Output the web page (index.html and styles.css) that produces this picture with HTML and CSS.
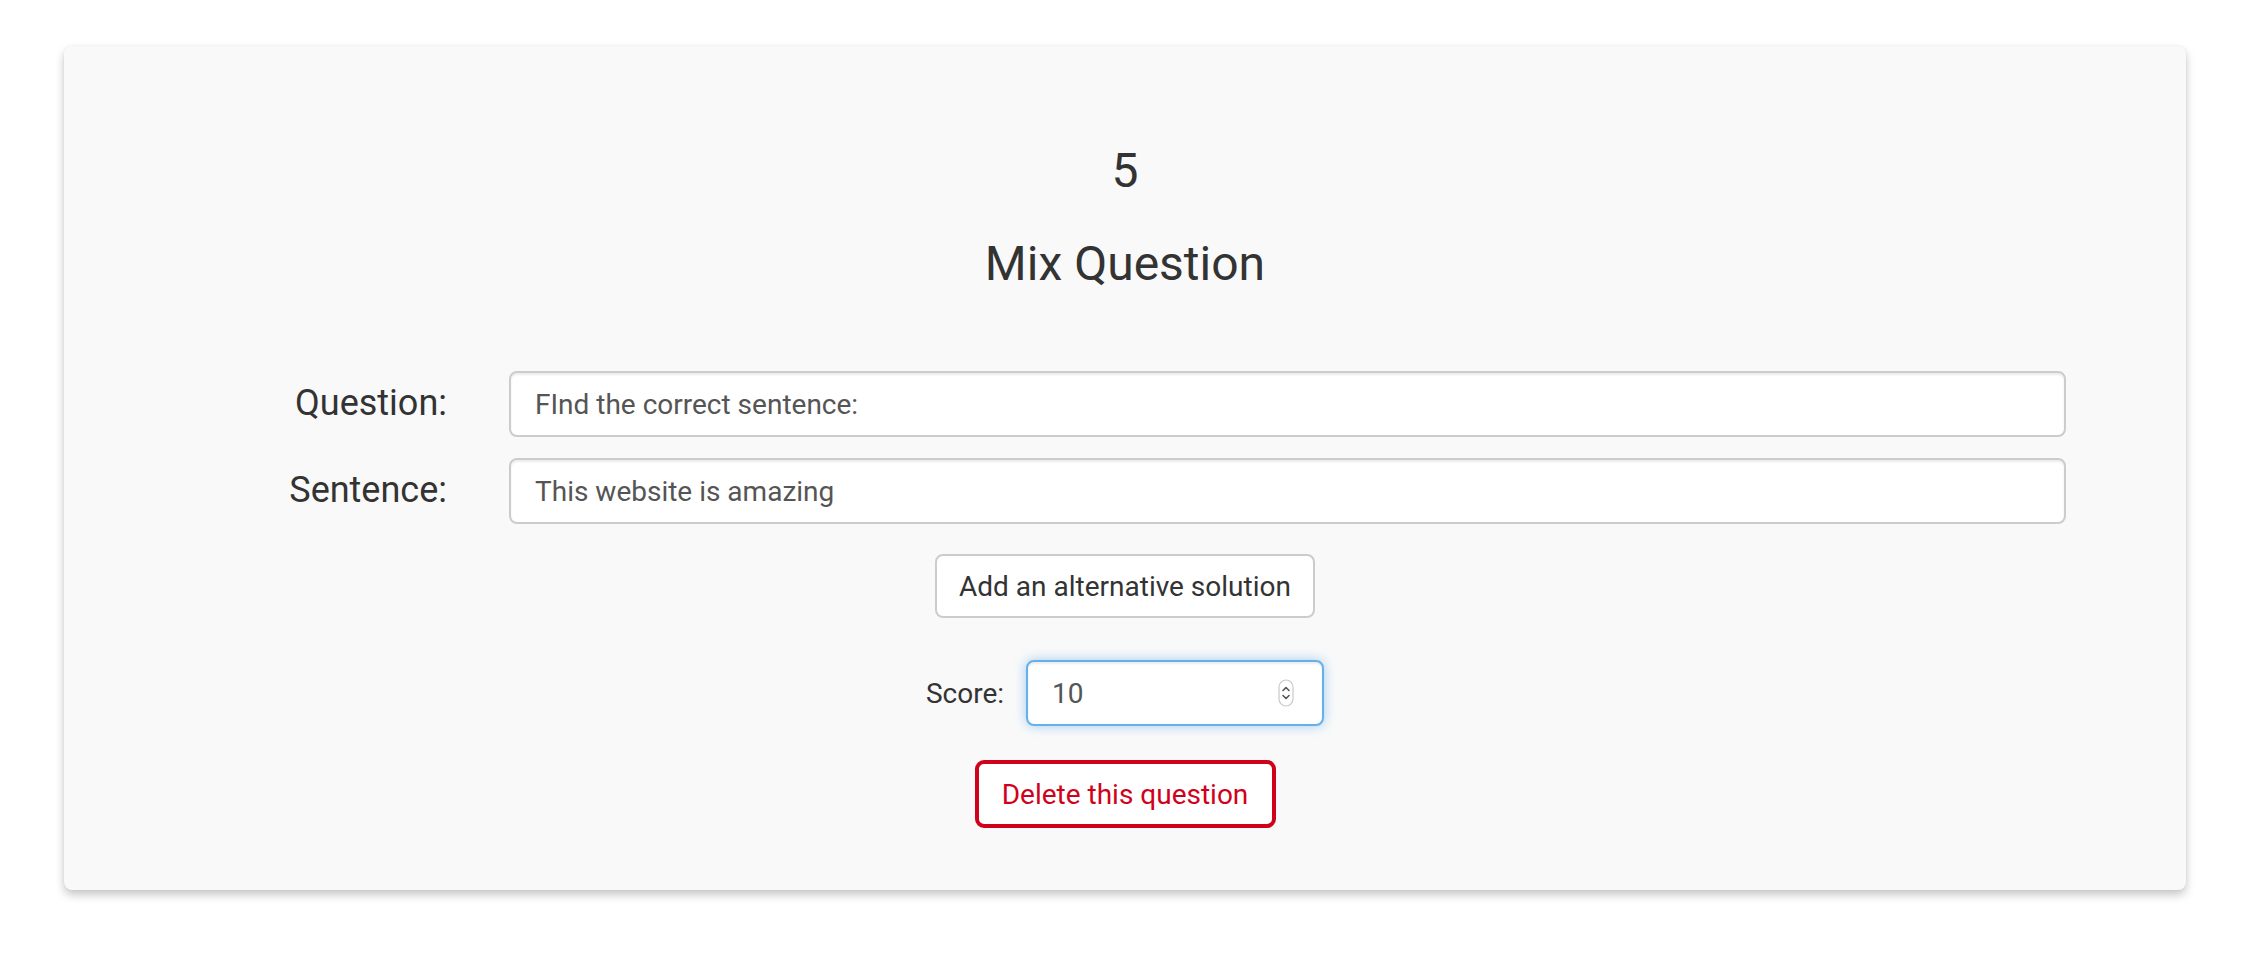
FILE: index.html
```html
<!DOCTYPE html>
<html lang="en">
<head>
<meta charset="utf-8">
<title>Mix Question</title>
<link rel="stylesheet" href="styles.css">
</head>
<body>
<div class="page">
  <section class="card">
    <h3 class="number">5</h3>
    <h3 class="title">Mix Question</h3>
    <form class="form">
      <div class="row">
        <label class="label">Question:</label>
        <input class="field" type="text" value="FInd the correct sentence:">
      </div>
      <div class="row">
        <label class="label">Sentence:</label>
        <input class="field" type="text" value="This website is amazing">
      </div>
      <div class="center add-wrap">
        <button type="button" class="btn">Add an alternative solution</button>
      </div>
      <div class="score-row">
        <label class="score-label">Score:</label>
        <div class="score-box">
          <input class="score-input" type="text" value="10">
          <svg class="spin" width="16" height="28" viewBox="0 0 16 28">
            <rect x="1" y="1" width="14" height="26" rx="7" fill="#fff" stroke="#c8c8c8" stroke-width="1.2"/>
            <path d="M5 11.5 L8 8.5 L11 11.5" fill="none" stroke="#555" stroke-width="1.6" stroke-linecap="round" stroke-linejoin="round"/>
            <path d="M5 16.5 L8 19.5 L11 16.5" fill="none" stroke="#555" stroke-width="1.6" stroke-linecap="round" stroke-linejoin="round"/>
          </svg>
        </div>
      </div>
      <div class="center delete-wrap">
        <button type="button" class="btn-delete">Delete this question</button>
      </div>
    </form>
  </section>
</div>
</body>
</html>
```
FILE: styles.css
```css
html, body {
  margin: 0;
  padding: 0;
  background: #ffffff;
}

body {
  font-family: Roboto, "Liberation Sans", Arial, sans-serif;
  color: #333333;
}

.page {
  padding: 46px 70px 40px 64px;
}

.card {
  background: #f9f9f9;
  border-radius: 8px;
  box-shadow: 0 5px 10px rgba(0, 0, 0, 0.22), 0 0 3px rgba(0, 0, 0, 0.06);
  padding: 98px 0 61px 0;
  box-sizing: border-box;
  height: 844px;
}

.number,
.title {
  margin: 0;
  text-align: center;
  font-size: 48px;
  font-weight: 400;
  line-height: 53px;
  color: #333333;
}

.title {
  margin-top: 40px;
}

.form {
  margin-top: 81px;
  display: flex;
  flex-direction: column;
}

.row {
  display: flex;
  align-items: center;
  gap: 62px;
  margin: 0 120px 21px 183px;
}

.label {
  width: 200px;
  flex: none;
  text-align: right;
  font-size: 36px;
  color: #333333;
  line-height: 40px;
  position: relative;
  top: -1px;
}

.field {
  flex: 1;
  height: 66px;
  box-sizing: border-box;
  border: 2px solid #cccccc;
  border-radius: 8px;
  background: #ffffff;
  box-shadow: inset 0 2px 2px rgba(0, 0, 0, 0.075);
  padding: 0 24px;
  font-family: Roboto, "Liberation Sans", Arial, sans-serif;
  font-size: 28px;
  color: #555555;
  outline: none;
}

.center {
  display: flex;
  justify-content: center;
}

.add-wrap {
  margin-top: 9px;
}

.btn {
  width: 380px;
  height: 64px;
  box-sizing: border-box;
  background: #ffffff;
  border: 2px solid #cccccc;
  border-radius: 8px;
  font-family: Roboto, "Liberation Sans", Arial, sans-serif;
  font-size: 28px;
  color: #333333;
  padding: 0;
}

.score-row {
  display: flex;
  justify-content: center;
  align-items: center;
  gap: 22px;
  margin-top: 42px;
}

.score-label {
  font-size: 28px;
  color: #333333;
}

.score-box {
  width: 298px;
  height: 66px;
  box-sizing: border-box;
  border: 2px solid #66afe9;
  border-radius: 8px;
  background: #ffffff;
  box-shadow: inset 0 2px 2px rgba(0, 0, 0, 0.075), 0 0 12px rgba(102, 175, 233, 0.6);
  display: flex;
  align-items: center;
  padding: 0 28px 0 24px;
}

.score-input {
  flex: 1;
  min-width: 0;
  border: none;
  background: transparent;
  outline: none;
  font-family: Roboto, "Liberation Sans", Arial, sans-serif;
  font-size: 28px;
  color: #555555;
  padding: 0;
}

.spin {
  flex: none;
  display: block;
}

.delete-wrap {
  margin-top: 34px;
}

.btn-delete {
  width: 301px;
  height: 68px;
  box-sizing: border-box;
  background: #ffffff;
  border: 4px solid #d0021b;
  border-radius: 9px;
  font-family: Roboto, "Liberation Sans", Arial, sans-serif;
  font-size: 28px;
  color: #d0021b;
  padding: 0;
}
```
